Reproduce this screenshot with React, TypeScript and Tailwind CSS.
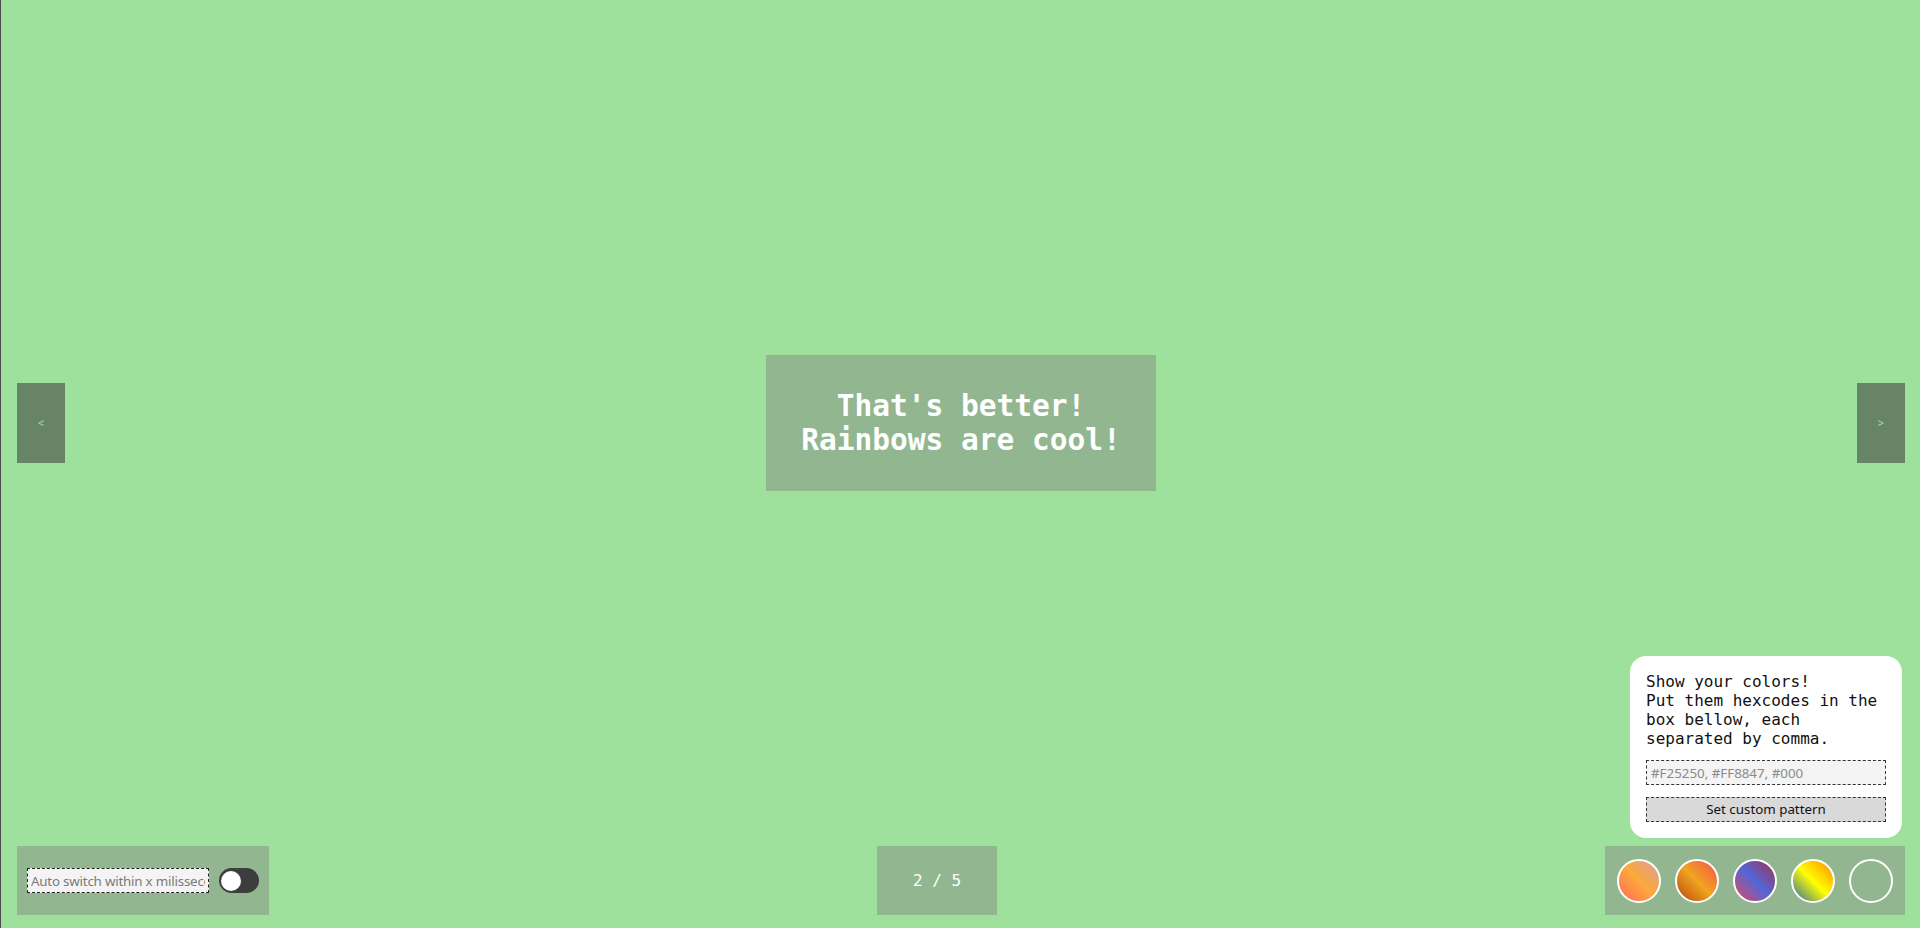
import { useState } from "react";

const mono = "font-['DejaVu_Sans_Mono',monospace]";
const sans = "font-['Noto_Sans',sans-serif]";

const patterns = [
  "bg-[linear-gradient(45deg,#ff6a5c_0%,#fca83a_50%,#d9a09d_100%)]",
  "bg-[linear-gradient(45deg,#b8470f_0%,#f0a41f_50%,#f2524e_100%)]",
  "bg-[linear-gradient(45deg,#e0485e_0%,#5267d6_50%,#a52d55_100%)]",
  "bg-[linear-gradient(45deg,#2f6aa6_0%,#ffff00_50%,#ff8a00_100%)]",
  "bg-transparent",
];

export default function App() {
  const [auto, setAuto] = useState(false);
  const [page] = useState(2);

  return (
    <div className="h-[928px] w-full overflow-hidden bg-[#9ee19c] border-l border-[#4b4b4b] flex flex-col pl-4 pr-[15px] pb-[13px]">
      <div className="flex-1 flex items-center justify-between">
        <button className="w-12 h-20 bg-[#688468] text-[#b0dcaa] text-[11px] font-['Noto_Sans',sans-serif]">&lt;</button>
        <div className={`w-[390px] h-[136px] bg-[#92b790] flex items-center justify-center text-center text-white font-bold text-[29.5px] leading-[34px] ${mono}`}>
          <p>
            That's better!
            <br />
            Rainbows are cool!
          </p>
        </div>
        <button className="w-12 h-20 bg-[#688468] text-[#b0dcaa] text-[11px] font-['Noto_Sans',sans-serif]">&gt;</button>
      </div>

      <div className="h-[69px] flex items-stretch justify-between">
        <div className="w-[252px] bg-[#92b790] flex items-center gap-[10px] px-[10px]">
          <input
            className={`w-[182px] h-[25px] bg-[#f4f4f4] border border-dashed border-[#222] px-[3px] text-[13.33px] tracking-[-0.2px] text-[#333] placeholder:text-[#7a7a7a] outline-none ${sans}`}
            placeholder="Auto switch within x milisseconds"
          />
          <button
            onClick={() => setAuto(!auto)}
            className={`w-10 h-[25px] rounded-full bg-[#3d3d3d] flex items-center px-[2px] ${auto ? "justify-end" : "justify-start"}`}
          >
            <span className="w-5 h-5 rounded-full bg-white" />
          </button>
        </div>

        <div className={`w-[120px] bg-[#92b790] flex items-center justify-center text-white text-base ${mono}`}>
          {page} / 5
        </div>

        <div className="relative w-[300px] bg-[#92b790] flex items-center gap-[14px] px-3">
          <div className="absolute right-[3px] bottom-[calc(100%+8px)] w-[272px] bg-white rounded-2xl p-4 flex flex-col gap-3">
            <p className={`text-base leading-[19px] text-[#111] ${mono}`}>
              Show your colors!
              <br />
              Put them hexcodes in the box bellow, each separated by comma.
            </p>
            <input
              className={`w-full h-[25px] bg-[#f4f4f4] border border-dashed border-[#333] px-1 text-[13.33px] placeholder:text-[#8a8a8a] outline-none ${sans}`}
              placeholder="#F25250, #FF8847, #000"
            />
            <button className={`w-full h-[25px] bg-[#d9d9d9] border border-dashed border-[#333] text-[13.33px] text-[#111] ${sans}`}>
              Set custom pattern
            </button>
          </div>
          {patterns.map((p, i) => (
            <button key={i} className={`w-11 h-11 rounded-full border-2 border-white shrink-0 ${p}`} />
          ))}
        </div>
      </div>
    </div>
  );
}
